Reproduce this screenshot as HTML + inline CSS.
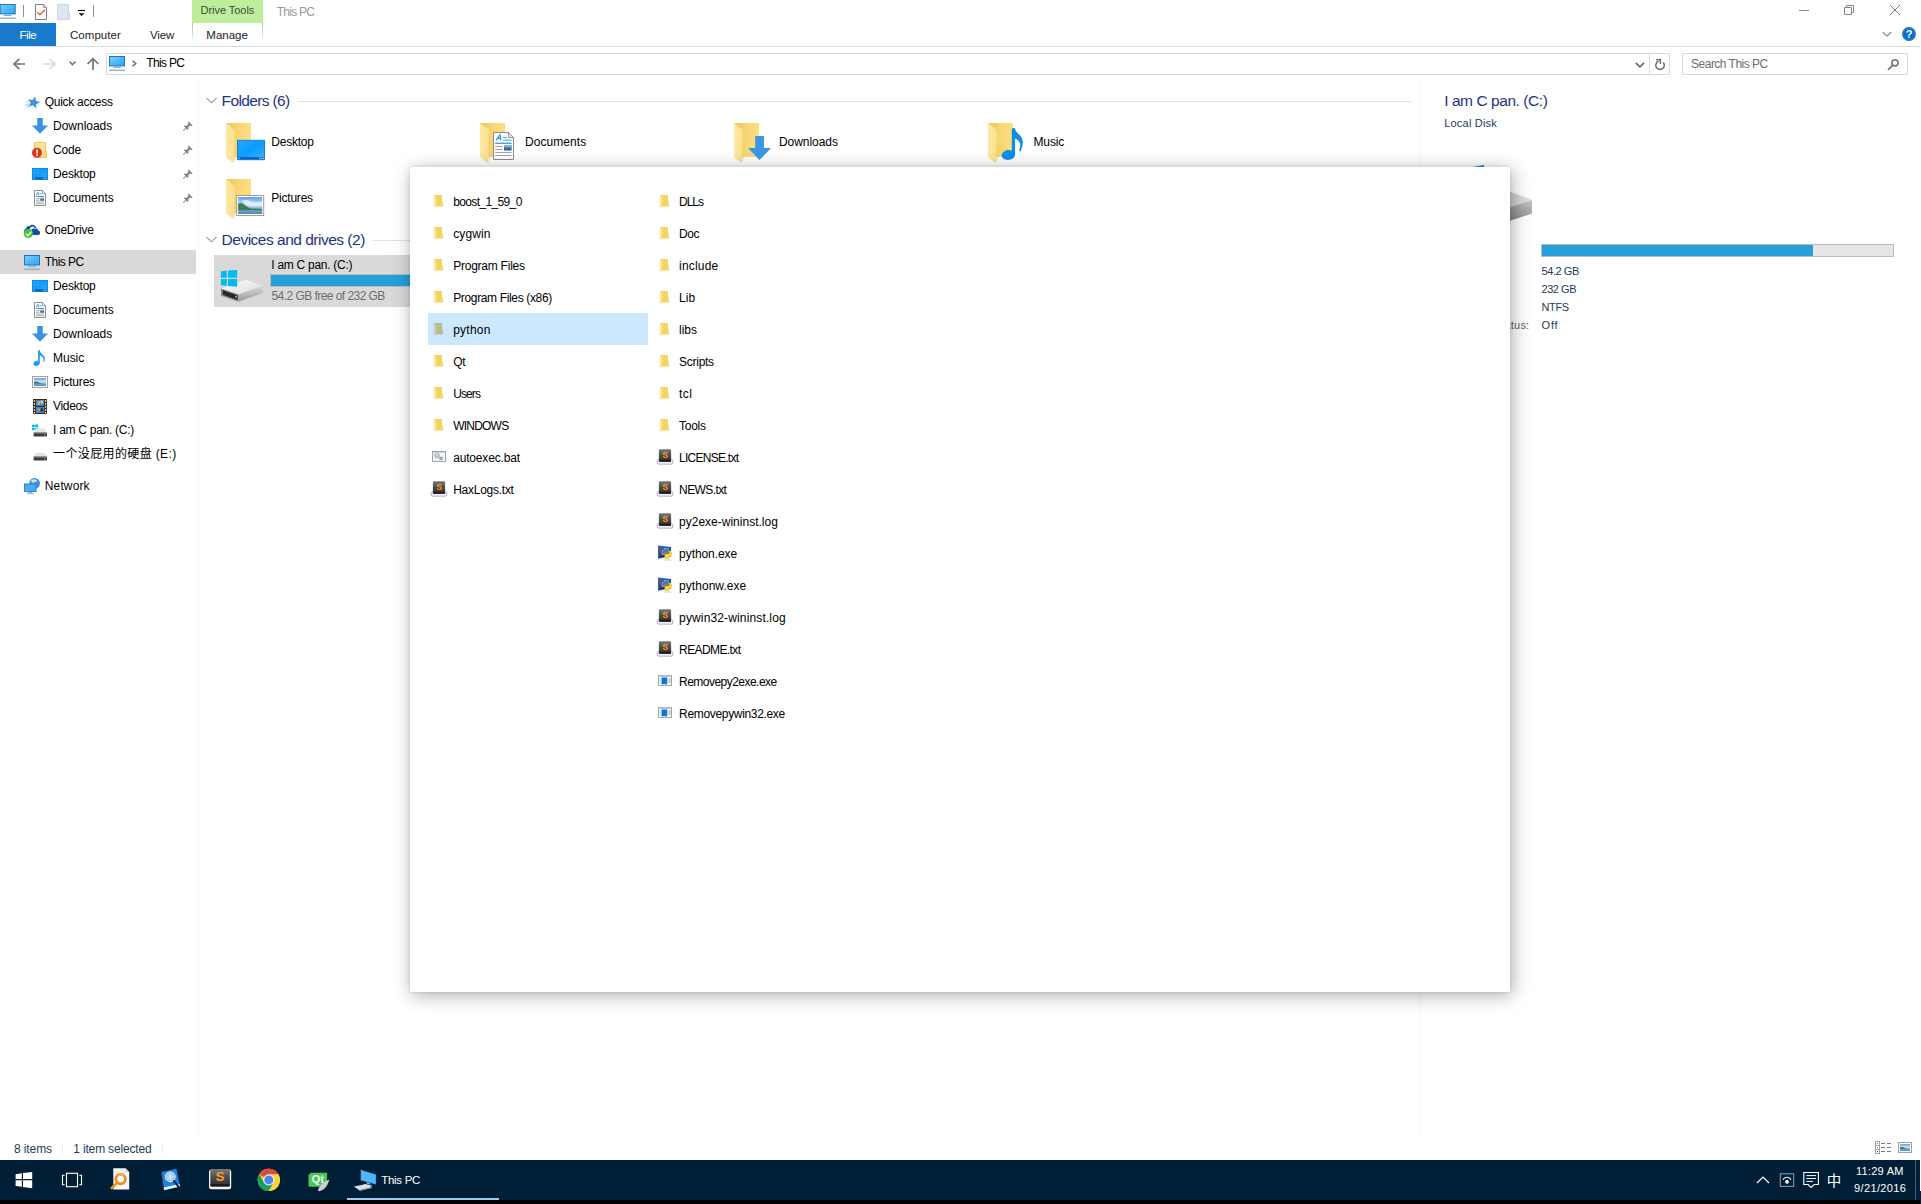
<!DOCTYPE html>
<html lang="en">
<head>
<meta charset="utf-8">
<title>This PC</title>
<style>
html,body{margin:0;padding:0;}
body{width:1921px;height:1204px;position:relative;overflow:hidden;background:#fff;font-family:"Liberation Sans","Noto Sans CJK SC",sans-serif;font-size:12px;color:#000;}
.a{position:absolute;}
.t{position:absolute;white-space:nowrap;line-height:1;font-size:12px;}
.ln{position:absolute;background:#e2e2e2;}
svg{position:absolute;overflow:visible;}
#panel{position:absolute;left:410px;top:167px;width:1100px;height:825px;background:#fff;box-shadow:1.7px 3px 18px rgba(0,0,0,.33),0 0 3.7px rgba(0,0,0,.106);}
#taskbar{position:absolute;left:0;top:1160px;width:1920px;height:40px;background:#001f37;}
#blackstrip{position:absolute;left:0;top:1200px;width:1920px;height:4px;background:#000;}
</style>
</head>
<body>

<svg width="0" height="0" style="position:absolute">
<defs>
<linearGradient id="gmon" x1="0" y1="0" x2="1" y2="1"><stop offset="0" stop-color="#7fd2ff"/><stop offset=".5" stop-color="#4db9fb"/><stop offset="1" stop-color="#2aa6f4"/></linearGradient>
<linearGradient id="gdesk" x1="0" y1="0" x2="1" y2="1"><stop offset="0" stop-color="#27a6ff"/><stop offset=".5" stop-color="#0c9dff"/><stop offset="1" stop-color="#3cb0ff"/></linearGradient>
<linearGradient id="gfold" x1="0" y1="0" x2="1" y2="0"><stop offset="0" stop-color="#eec65c"/><stop offset=".5" stop-color="#f7d673"/><stop offset="1" stop-color="#fcde83"/></linearGradient>
<linearGradient id="gflap" x1="0" y1="0" x2="1" y2="0"><stop offset="0" stop-color="#fde9a6"/><stop offset="1" stop-color="#fbdf8c"/></linearGradient>
<linearGradient id="gsky" x1="0" y1="0" x2="0" y2="1"><stop offset="0" stop-color="#5d9bee"/><stop offset=".45" stop-color="#cfe6fb"/><stop offset=".7" stop-color="#7fb0d0"/><stop offset="1" stop-color="#4d87b8"/></linearGradient>
<linearGradient id="gdrvtop" x1="0" y1="0" x2="1" y2="1"><stop offset="0" stop-color="#fafafa"/><stop offset="1" stop-color="#dcdcdc"/></linearGradient>
<linearGradient id="gdrvside" x1="0" y1="0" x2="0" y2="1"><stop offset="0" stop-color="#d8d8d8"/><stop offset="1" stop-color="#9a9a9a"/></linearGradient>
<linearGradient id="gsub" x1="0" y1="0" x2="0" y2="1"><stop offset="0" stop-color="#7a7a7a"/><stop offset=".5" stop-color="#4a4a4a"/><stop offset="1" stop-color="#2c2c2c"/></linearGradient>
<!-- 16px monitor -->
<symbol id="mon16" viewBox="0 0 16 16" overflow="visible">
<rect x=".5" y=".5" width="15" height="9.4" fill="url(#gmon)" stroke="#2a72ad" stroke-width="1"/>
<rect x="4.2" y="10.8" width="7.6" height="1" fill="#5f9fd0"/>
<rect x="7" y="10" width="2" height="1" fill="#8fbfe4"/>
<rect x="0" y="13.6" width="16" height="1.3" fill="#8fa9c2"/>
</symbol>
<!-- 16px desktop -->
<symbol id="desk16" viewBox="0 0 16 12" overflow="visible">
<rect x=".5" y=".5" width="15" height="11" fill="url(#gdesk)" stroke="#1a86df"/>
<rect x="1" y="9.3" width="14" height="1.9" fill="#0b61b8"/>
<rect x="1.5" y="9.8" width="1" height="1" fill="#fff"/><rect x="11.6" y="9.8" width="1" height="1" fill="#fff"/><rect x="13.4" y="9.8" width="1" height="1" fill="#fff"/>
</symbol>
<!-- 16px downloads arrow -->
<symbol id="dl16" viewBox="0 0 16 16" overflow="visible">
<path d="M5.2 0H10.8V7.4H16L8 15.8L0 7.4H5.2Z" fill="#3b92e2"/>
</symbol>
<!-- 16px document -->
<symbol id="doc16" viewBox="0 0 12 16" overflow="visible">
<path d="M.5 .5H8.3L11.5 3.7V15.5H.5Z" fill="#fff" stroke="#8c8c8c"/>
<path d="M8.3 .5V3.7H11.5" fill="#e8e8e8" stroke="#8c8c8c" stroke-width=".8"/>
<path d="M2.2 5.2L3.9 2.2L4.6 5.2" fill="none" stroke="#2b8be0" stroke-width=".9"/>
<rect x="5.5" y="3.4" width="2.2" height=".8" fill="#3a96e6"/>
<rect x="2" y="6.1" width="8" height=".9" fill="#2b8be0"/>
<rect x="2" y="8" width="3.4" height=".8" fill="#9a9a9a"/><rect x="2" y="9.8" width="3.4" height=".8" fill="#9a9a9a"/>
<rect x="6.2" y="7.8" width="3.8" height="3" fill="#3c6e9e"/><rect x="6.2" y="7.8" width="3.8" height="1.2" fill="#7eb2ea"/>
<rect x="2" y="11.7" width="8" height=".8" fill="#9a9a9a"/><rect x="2" y="13.4" width="8" height=".8" fill="#9a9a9a"/>
</symbol>
<!-- pin -->
<symbol id="pin" viewBox="0 0 10 10" overflow="visible">
<path d="M5.6 .3L9.7 4.4L8.6 5L6.9 4.7L5.3 6.6L5.4 8.6L4.4 9L1 5.6L1.4 4.6L3.4 4.7L5.3 3.1L5 1.4Z" fill="#8a8a8a"/>
<path d="M2.7 7.3L.3 9.7" stroke="#8a8a8a" stroke-width="1.1"/>
</symbol>
<!-- big folder 41x42 -->
<symbol id="bigfold" viewBox="0 0 41 42" overflow="visible">
<rect x="1" y="1" width="25" height="34" fill="url(#gfold)"/>
<path d="M1 1L10 8.2L9 41L1 35.6Z" fill="url(#gflap)"/>
<path d="M9 41L9.3 35L11.5 35Z" fill="#d9d9d9" opacity=".6"/>
</symbol>
<!-- small folder (panel) 12x14 -->
<symbol id="sfold" viewBox="0 0 10 14" overflow="visible">
<path d="M.6 0H8.7V6.4H9.7V11.4H.6Z" fill="#f5d168"/>
<path d="M8.7 6.4V11.4" stroke="#f9dd88" stroke-width=".6"/>
<path d="M.4 .3L3 2.5L2.5 13.2L.4 11.5Z" fill="#fce8a6"/>
</symbol>
<!-- sublime text icon 16x16 -->
<symbol id="sfoldsel" viewBox="0 0 10 14" overflow="visible">
<path d="M.6 0H8.7V6.4H9.7V11.4H.6Z" fill="#b6bd90"/>
<path d="M.4 .3L3 2.5L2.5 13.2L.4 11.5Z" fill="#c9cacb"/>
</symbol>
<symbol id="subl" viewBox="0 0 16 16" overflow="visible">
<rect x=".2" y="10.6" width="15.6" height="4.6" rx="1.3" fill="#f1f1f1" stroke="#8c8c8c" stroke-width=".6"/>
<rect x="1.9" y=".2" width="12.2" height="12.6" rx="1.4" fill="url(#gsub)"/>
<rect x="1.9" y="11.2" width="12.2" height="1.6" rx=".7" fill="#1c1c1c"/>
<text x="8" y="9.1" font-family="Liberation Sans, sans-serif" font-weight="bold" font-size="8.6" fill="#ff9c24" text-anchor="middle">S</text>
</symbol>
</defs>
</svg>
<svg width="0" height="0" style="position:absolute">
<defs>
<linearGradient id="gpywin" x1="0" y1="0" x2="1" y2="1"><stop offset="0" stop-color="#6a6a6a"/><stop offset="1" stop-color="#0c0c0c"/></linearGradient>
<symbol id="bat" viewBox="0 0 14 11" overflow="visible">
<rect x=".5" y=".5" width="13" height="10" fill="#f3f4f5" stroke="#a3a3a3"/>
<rect x="0" y="0" width="14" height="1.3" fill="#9a9a9a"/>
<circle cx="5" cy="4.6" r="2.9" fill="#b4c3d3"/><circle cx="5" cy="4.6" r="1" fill="#d8dfe8"/>
<circle cx="9" cy="7.4" r="1.9" fill="#a9a9a9"/>
</symbol>
<symbol id="inst" viewBox="0 0 14 11" overflow="visible">
<rect x=".5" y=".5" width="13" height="10" fill="#fff" stroke="#a6a6a6"/>
<rect x="0" y="0" width="14" height="1.7" fill="#b2b2b2"/>
<rect x="3.5" y="2.5" width="5.6" height="6.6" rx=".5" fill="#0a78d7"/>
<rect x="3.2" y="2.2" width="6.2" height="7.2" rx=".8" fill="none" stroke="#5fb0f0" stroke-width=".5"/>
<rect x="10.3" y="3.4" width="2.5" height="4.6" fill="#c9c9c9"/>
<rect x="1" y="3" width="1.4" height=".8" fill="#d0d0d0"/><rect x="1" y="5.2" width="1.4" height=".8" fill="#d0d0d0"/><rect x="1" y="7.4" width="1.4" height=".8" fill="#d0d0d0"/>
</symbol>
<symbol id="pyexe" viewBox="0 0 15 16" overflow="visible">
<ellipse cx="9" cy="15" rx="4.5" ry=".9" fill="#e2e2e2"/>
<path d="M0 .6L13 1.9V11.6L0 13.8Z" fill="#1c62d2"/>
<path d="M.9 2.4L12.3 3.3V11L.9 12.7Z" fill="url(#gpywin)"/>
<path d="M6.2 3.6H9.6C10.6 3.6 11.2 4.2 11.2 5.2V7.2H7.6C6.6 7.2 6.2 7.8 6.2 8.8V9.8H5C4.2 9.8 3.8 9.2 3.8 8.2V6.6C3.8 5.6 4.4 5.2 5.2 5.2H6.2Z" fill="#3b76ad" stroke="#dfeaf5" stroke-width=".5"/>
<path d="M11.2 6H12.6C13.6 6 14.2 6.6 14.2 7.6V9.6C14.2 10.6 13.6 11.2 12.6 11.2H11.6V12.4C11.6 13.4 11 14 10 14H8.2C7.2 14 6.6 13.4 6.6 12.4V10C6.6 9 7.2 8.4 8.2 8.4H11.2Z" fill="#ffd23c"/>
</symbol>
</defs>
</svg>

<!-- title bar / ribbon -->
<div class="a" id="drivetools" style="left:192px;top:0;width:71px;height:23px;background:#bdee9b;"></div>
<div class="a" id="filetab" style="left:0;top:23px;width:56px;height:23px;background:#1979ca;"></div>
<div class="a" id="managetabL" style="left:192px;top:23px;width:1px;height:18px;background:linear-gradient(#bcbcbc,#dadada 60%,#fff);"></div>
<div class="a" id="managetabR" style="left:262px;top:23px;width:1px;height:18px;background:linear-gradient(#bcbcbc,#dadada 60%,#fff);"></div>
<div class="ln" id="ribbonline" style="left:0;top:46px;width:1920px;height:1px;background:#dadbdc;"></div>
<!-- address bar -->
<div class="a" id="addrbox" style="left:106px;top:53px;width:1564px;height:22px;border:1px solid #d9d9d9;box-sizing:border-box;"></div>
<div class="a" id="addrsep" style="left:1649px;top:53px;width:1px;height:22px;background:#d9d9d9;"></div>
<div class="a" id="searchbox" style="left:1682px;top:53px;width:226px;height:22px;border:1px solid #d9d9d9;box-sizing:border-box;"></div>
<!-- nav pane -->
<div class="a" id="navsel" style="left:0;top:250px;width:196px;height:24px;background:#d9d9d9;"></div>
<div class="ln" id="navdiv" style="left:198px;top:82px;width:1px;height:1054px;background:#f6f6f6;"></div>
<div class="ln" id="detdiv" style="left:1419px;top:82px;width:1px;height:1054px;background:#f6f6f6;"></div>
<!-- content group lines -->
<div class="ln" style="left:298px;top:101px;width:1113px;height:1px;"></div>
<div class="ln" style="left:373px;top:240px;width:1038px;height:1px;"></div>
<!-- drive tile -->
<div class="a" id="drivesel" style="left:214px;top:255px;width:253px;height:52px;background:#d9d9d9;"></div>
<div class="a" id="drivebar" style="left:270px;top:274px;width:190px;height:13px;background:#e6e6e6;border:1px solid #bcbcbc;box-sizing:border-box;"></div>
<div class="a" id="drivebarfill" style="left:271px;top:275px;width:146px;height:11px;background:#26a0da;"></div>
<!-- details pane bar -->
<div class="a" id="detbar" style="left:1541px;top:244px;width:353px;height:13px;background:#e6e6e6;border:1px solid #bcbcbc;box-sizing:border-box;"></div>
<div class="a" id="detbarfill" style="left:1542px;top:245px;width:271px;height:11px;background:#26a0da;"></div>
<!-- status bar separators -->
<div class="ln" style="left:62px;top:1143px;width:1px;height:11px;background:#ececec;"></div>
<div class="ln" style="left:162px;top:1143px;width:1px;height:11px;background:#ececec;"></div>
<!-- taskbar -->
<div id="taskbar"></div>
<div id="blackstrip"></div>
<div class="a" id="edgecol" style="left:1920px;top:1191px;width:1px;height:13px;background:#001f37;"></div>

<div class="a" id="tbactiveline" style="left:347px;top:1198px;width:152px;height:2px;background:#9bcaf4;"></div>
<div class="a" id="showdesk" style="left:1915px;top:1160px;width:1px;height:40px;background:#4a5a6a;"></div>

<svg id="ic1" class="a" style="left:0;top:0" width="1921" height="1204" viewBox="0 0 1921 1204">
<!-- title bar QAT -->
<use href="#mon16" x="-0.3" y="4" width="16" height="16"/>
<rect x="23" y="5" width="1" height="12" fill="#8f8f8f"/>
<g transform="translate(35,4)">
<path d="M.5 .5H8.6L11.5 3.4V15.5H.5Z" fill="#fbfbfb" stroke="#7c7c7c"/>
<path d="M8.6 .5V3.4H11.5" fill="#e6e6e6" stroke="#7c7c7c" stroke-width=".8"/>
<path d="M2.4 8.2L4.9 10.6L10 5.9" fill="none" stroke="#e8501c" stroke-width="1.3"/>
</g>
<g transform="translate(57,4)">
<path d="M.5 .5H11.5V9H12.5V15.5H.5Z" fill="#dde4f3" stroke="#cbd5ec"/>
<path d="M10.2 9.2V15.4" stroke="#c5d0ea" stroke-width=".8"/>
</g>
<rect x="78" y="10" width="7" height="1" fill="#000"/>
<path d="M78.6 13.2H84.4L81.5 16.1Z" fill="#000"/>
<rect x="93" y="5" width="1" height="12" fill="#8f8f8f"/>
<!-- window controls -->
<rect x="1799" y="10" width="10" height="1" fill="#858585"/>
<path d="M1844.5 7.5H1851.5V14.5H1844.5Z M1846.5 7.3V5.5H1853.5V12.5H1851.7" fill="none" stroke="#858585" stroke-width="1"/>
<path d="M1890 5L1900 15M1900 5L1890 15" stroke="#787878" stroke-width="1" fill="none"/>
<path d="M1882.8 32L1887 36.1L1891.2 32" fill="none" stroke="#8c8c8c" stroke-width="1.3"/>
<circle cx="1909" cy="34" r="6.9" fill="#0f6ecd"/>
<circle cx="1909" cy="34" r="6.1" fill="none" stroke="#2a86e0" stroke-width=".7"/>
<text x="1909" y="38.1" font-family="Liberation Sans, sans-serif" font-size="11" font-weight="bold" fill="#fff" text-anchor="middle">?</text>
<!-- nav arrows -->
<path d="M25 64H14M19.3 58.8L14 64L19.3 69.2" fill="none" stroke="#737373" stroke-width="1.7"/>
<path d="M43 64H54M49.7 58.8L55 64L49.7 69.2" fill="none" stroke="#dadada" stroke-width="1.7"/>
<path d="M69.5 61.6L72.5 64.6L75.5 61.6" fill="none" stroke="#777" stroke-width="1.5"/>
<path d="M93 70V59M87.6 64L93 58.6L98.4 64" fill="none" stroke="#737373" stroke-width="1.7"/>
<use href="#mon16" x="109" y="56" width="16" height="16"/>
<path d="M132.5 60.8L135.7 63.5L132.5 66.2" fill="none" stroke="#6a6a6a" stroke-width="1.5"/>
<path d="M1635.8 62.8L1639.9 66.9L1644 62.8" fill="none" stroke="#6a6a6a" stroke-width="1.7"/>
<!-- refresh -->
<path d="M1663.3 62.4A4.25 4.25 0 1 1 1658.3 61.3" fill="none" stroke="#6c6c6c" stroke-width="1.5"/>
<path d="M1656.2 59.7H1660.4V63.9" fill="none" stroke="#6c6c6c" stroke-width="1.5"/>
<!-- search magnifier -->
<circle cx="1895" cy="62.8" r="3.1" fill="none" stroke="#727472" stroke-width="1.6"/>
<path d="M1892.8 65.1L1888 69.9" stroke="#727472" stroke-width="1.7" fill="none"/>
<!-- nav pane icons -->
<g transform="translate(25.5,96)">
<path d="M8.2 0L10 4.3L14.4 4.6L11 7.5L12.2 11.8L8.2 9.4L4.3 11.8L5.4 7.5L2 4.6L6.5 4.3Z" fill="#3c97e0" transform="rotate(14 8.2 6.2)"/>
<path d="M0 9.5L4 7.7M1 6.2L3.2 5.6M1.2 11.6L4.2 9.6" stroke="#7fbaf0" stroke-width=".9"/>
</g>
<use href="#dl16" x="32" y="118" width="16" height="16"/>
<g transform="translate(32,142)">
<path d="M2.5 .5H13.5V9H14.5V15.5H2.5Z" fill="#fbe29a" stroke="#f0c850"/>
<path d="M12.4 9.2V15.3" stroke="#f0c850" stroke-width=".8"/>
<circle cx="5" cy="10.7" r="5" fill="#d8381c"/>
<rect x="4.3" y="7.5" width="1.5" height="4.2" fill="#fff"/><rect x="4.3" y="12.5" width="1.5" height="1.5" fill="#fff"/>
</g>
<use href="#desk16" x="32" y="168" width="16" height="12"/>
<use href="#doc16" x="34" y="190" width="12" height="16"/>
<use href="#pin" x="183" y="121" width="10" height="10"/>
<use href="#pin" x="183" y="145" width="10" height="10"/>
<use href="#pin" x="183" y="169" width="10" height="10"/>
<use href="#pin" x="183" y="193" width="10" height="10"/>
<!-- onedrive -->
<g transform="translate(24,225)">
<path d="M0 7C0 4.8 1 3.8 2.2 3.6C2.4 1.6 4 .8 5.6 1.2C6.6 -.1 8.2 -.3 9.4 -.1C11.2 .2 12.4 1.6 12.2 3L10.6 3C10.4 2.2 9.6 1.5 8.6 1.5C7.4 1.5 6.4 2.2 6 3.4L6 7Z" fill="#0d4db0"/>
<path d="M7.2 10C6.4 8 6.6 6 7.6 4.6C8.4 3.4 10 3 11 3.8C12.4 3.2 13.8 3.8 14.2 5.4C15.4 5.6 16.1 6.6 16.1 7.8C16.1 9 15.4 10 14.4 10Z" fill="#0f4fae" stroke="#fff" stroke-width="1.2" paint-order="stroke"/>
<circle cx="4.3" cy="8.5" r="4.6" fill="#4bc52c"/>
<path d="M1.9 8.6L3.9 10.7L7.5 6.6" fill="none" stroke="#fff" stroke-width="1.3"/>
</g>
<use href="#mon16" x="24" y="255" width="16" height="16"/>
<use href="#desk16" x="32" y="280" width="16" height="12"/>
<use href="#doc16" x="34" y="302" width="12" height="16"/>
<use href="#dl16" x="32" y="326" width="16" height="16"/>
<!-- music -->
<g transform="translate(33.5,350)">
<path d="M4.6 0.2H6.3C6.6 2.4 8 3.6 9.6 5C11.8 7 12 9.6 10.4 12L9.6 11.6C10.6 9.6 10.2 7.6 8.2 6.2C7.4 5.7 6.8 5.4 6.3 5.2V12.6C6.3 14.6 4.6 16 2.8 16C1 16 0 15 0 13.7C0 12.2 1.6 10.8 3.4 10.8C3.9 10.8 4.3 10.9 4.6 11Z" fill="#1e9bf0"/>
</g>
<!-- pictures -->
<g transform="translate(32,376)">
<rect x=".5" y=".5" width="15" height="11" fill="#fff" stroke="#a0a0a0"/>
<rect x="2" y="2" width="12" height="8" fill="url(#gsky)"/>
<path d="M2 6.2C4 4.8 6 5.6 8 7L11 7.8H2Z" fill="#3f7f5a"/>
</g>
<!-- videos -->
<g transform="translate(33,399)">
<rect x="0" y="0" width="14" height="15" fill="#2b2b2b"/>
<rect x="3" y="1" width="8" height="6" fill="#3b86d8"/><rect x="3" y="8" width="8" height="6" fill="#3b86d8"/>
<rect x="4.5" y="2.2" width="2.5" height="3.5" fill="#e8b03a"/><rect x="7.6" y="1.6" width="2.4" height="3" fill="#f0d060"/>
<rect x="4.5" y="9" width="2.5" height="3.5" fill="#d88a2a"/><rect x="7.6" y="9.4" width="2.4" height="3" fill="#2a2a4a"/>
<g fill="#fff"><rect x=".8" y="1.2" width="1.3" height="1.5"/><rect x=".8" y="4.2" width="1.3" height="1.5"/><rect x=".8" y="7.2" width="1.3" height="1.5"/><rect x=".8" y="10.2" width="1.3" height="1.5"/><rect x=".8" y="13" width="1.3" height="1.3"/>
<rect x="11.9" y="1.2" width="1.3" height="1.5"/><rect x="11.9" y="4.2" width="1.3" height="1.5"/><rect x="11.9" y="7.2" width="1.3" height="1.5"/><rect x="11.9" y="10.2" width="1.3" height="1.5"/><rect x="11.9" y="13" width="1.3" height="1.3"/></g>
</g>
<!-- C drive small -->
<g transform="translate(32,424)">
<g fill="#00b4f0"><rect x="0" y=".8" width="2.6" height="2.4"/><rect x="3.3" y=".5" width="2.8" height="2.7"/><rect x="0" y="3.9" width="2.6" height="2.3"/><rect x="3.3" y="3.9" width="2.8" height="2.6"/></g>
<path d="M1.6 8.4L4 4.6H12.6L15 8.4Z" fill="#e4e4e4"/>
<rect x="1.6" y="8.4" width="13.4" height="4" rx=".6" fill="#3c3c3c"/>
<rect x="1.6" y="8.4" width="13.4" height="1" fill="#9a9a9a"/>
<rect x="11.8" y="10.2" width="1.6" height="1.2" fill="#46d246"/>
</g>
<!-- E drive small -->
<g transform="translate(32,448)">
<path d="M1.6 8.4L4 4.8H12.6L15 8.4Z" fill="#e4e4e4"/>
<rect x="1.6" y="8.4" width="13.4" height="4" rx=".6" fill="#3c3c3c"/>
<rect x="1.6" y="8.4" width="13.4" height="1" fill="#9a9a9a"/>
<rect x="11.8" y="10.2" width="1.6" height="1.2" fill="#46d246"/>
</g>
<!-- network -->
<g transform="translate(24,478)">
<circle cx="10.6" cy="5.4" r="5.4" fill="#4a8fdc"/>
<path d="M7 2.5C9 1 12 1.4 13.4 3C12 4 11 3.4 10 4.4C9 5.4 7.6 4.6 7 2.5Z" fill="#cfe4f8"/>
<rect x=".5" y="6" width="11.5" height="7.6" fill="#4eaaf0" stroke="#2f86d4"/>
<rect x="4.6" y="14" width="3.4" height="1" fill="#7aa6c8"/><rect x="2.6" y="15.2" width="7.4" height="1" fill="#9fb6c8"/>
</g>
<!-- content chevrons -->
<path d="M206.5 98L211.5 103L216.5 98" fill="none" stroke="#6a6a6a" stroke-width="1"/>
<path d="M206.5 237L211.5 242L216.5 237" fill="none" stroke="#6a6a6a" stroke-width="1"/>
<!-- big folders -->
<use href="#bigfold" x="225" y="122" width="41" height="42"/>
<g transform="translate(225,122)">
<rect x="12.5" y="18.3" width="27" height="19.4" fill="url(#gdesk)" stroke="#1684de"/>
<rect x="13" y="35.2" width="26" height="2.2" fill="#0a5fb6"/>
<g fill="#fff"><rect x="13.6" y="35.8" width="1" height="1"/><rect x="34.4" y="35.8" width="1" height="1"/><rect x="36.2" y="35.8" width="1" height="1"/><rect x="37.9" y="35.8" width="1" height="1"/></g>
</g>
<use href="#bigfold" x="479" y="122" width="41" height="42"/>
<g transform="translate(493,132)">
<path d="M.5 .5H15.5L20.5 5.5V27.5H.5Z" fill="#fff" stroke="#8c8c8c"/>
<path d="M15.5 .5V5.5H20.5Z" fill="#e9e9e9" stroke="#8c8c8c" stroke-width=".9"/>
<path d="M3 8.4L7 2.6L8 8.4M4.4 6.4H7.6" fill="none" stroke="#2b8be0" stroke-width="1.1"/>
<rect x="10.2" y="4.9" width="3.6" height="1" fill="#3a96e6"/><rect x="10.2" y="7.6" width="8.3" height="1" fill="#3a96e6"/>
<rect x="2.2" y="10.7" width="16.4" height="1.1" fill="#1e86e0"/>
<rect x="2.2" y="14" width="7.6" height=".9" fill="#9a9a9a"/><rect x="2.2" y="17" width="7.6" height=".9" fill="#9a9a9a"/>
<rect x="11" y="13" width="7.6" height="5.6" fill="#3a6a9a"/><rect x="11" y="13" width="7.6" height="2.4" fill="#7fb2ec"/>
<rect x="2.2" y="20" width="16.4" height=".9" fill="#9a9a9a"/><rect x="2.2" y="23" width="16.4" height=".9" fill="#9a9a9a"/>
</g>
<use href="#bigfold" x="733" y="122" width="41" height="42"/>
<path d="M755.2 136H764V148.1H771.1L759.5 160L748 148.1H755.2Z" fill="#3b97e6"/>
<use href="#bigfold" x="987" y="122" width="41" height="42"/>
<g transform="translate(987,122)">
<path d="M24.8 7.6C24.8 6.2 27 5.6 28 6.6C28.6 9.4 30.4 11 32.6 13C36.4 16.6 37 21.6 33.4 29.6L32 28.8C34 23.8 33.6 20.4 30.6 18C29.6 17.2 28.8 16.8 28 16.6V32.6C28 35.8 24.8 38 20.8 38C17.2 38 14.8 36.2 14.8 33.6C14.8 30.6 18 28 21.6 28C22.8 28 24 28.3 24.8 28.8Z" fill="#0c8fea"/>
</g>
<use href="#bigfold" x="225" y="178" width="41" height="42"/>
<g transform="translate(225,178)">
<rect x="11.7" y="17.5" width="27" height="20" fill="#fff" stroke="#9c9c9c"/>
<rect x="13.2" y="19" width="24" height="17" fill="url(#gsky)"/>
<path d="M13.2 25.6C15 24.6 17 25 19 26.4C21 27.8 23 29.6 26 30.4L37.2 31V32.2H13.2Z" fill="#3d7d58"/>
<path d="M17 23C20 21.4 23 22 26 23.6C29 25 33 24.6 37.2 23.4V27.6C32 28.4 28 28.6 24 27.4C21 26.4 19 24.4 17 23Z" fill="#e8f2fc" opacity=".85"/>
</g>
<!-- drive icon big -->
<g transform="translate(212,252)">

<path d="M9 36.4L34 27.7L50.8 34L26.5 42.4Z" fill="url(#gdrvtop)"/>
<path d="M26.5 42.4L50.8 34V41.2L26.5 49.8Z" fill="url(#gdrvside)"/>
<path d="M9 36.4L26.5 42.4V49.8L9 43.8Z" fill="#8e8e8e"/>
<path d="M10.6 38L25.6 43.2V48L10.6 42.8Z" fill="#262829"/>
<rect x="23.1" y="43.6" width="1.9" height="1.7" fill="#4be04b" transform="skewY(19) translate(0,-8.1)"/>
<g fill="#00baf2">
<path d="M8.9 19.5L14.8 18.6V25.8H8.9Z"/><path d="M16 18.4L25.1 17.9V25.8H16Z"/>
<path d="M8.9 27H14.8V33.9L8.9 33.2Z"/><path d="M16 27H25.1V34.8L16 34.1Z"/>
</g>
</g>
<!-- details pane: visible sliver of large drive icon -->
<linearGradient id="gsl1" x1="0" y1="0" x2="1" y2="0"><stop offset="0" stop-color="#c4c4c4"/><stop offset="1" stop-color="#e2e2e2"/></linearGradient>
<linearGradient id="gsl2" x1="0" y1="0" x2="0" y2="1"><stop offset="0" stop-color="#cdcdcd"/><stop offset=".45" stop-color="#adadad"/><stop offset="1" stop-color="#9c9c9c"/></linearGradient>
<linearGradient id="gsl3" x1="0" y1="0" x2="1" y2="0"><stop offset="0" stop-color="#000" stop-opacity=".22"/><stop offset="1" stop-color="#000" stop-opacity="0"/></linearGradient>
<path d="M1500 188.6L1532 199.4L1500 210.4Z" fill="url(#gsl1)"/>
<path d="M1500 210.3L1532 199.7V213.5L1500 224Z" fill="url(#gsl2)"/>
<path d="M1500 210.3L1532 199.7V213.5L1500 224Z" fill="url(#gsl3)"/>
<path d="M1534 213.4L1540 211.5L1534 214.8Z" fill="#f0f0f0"/>
<path d="M1472.5 167L1484 164.8V167Z" fill="#1e9fe0"/>
<!-- status bar view icons -->
<g transform="translate(1875,1141)">
<rect x=".5" y=".5" width="4" height="12" fill="#fff" stroke="#a2a2a2"/>
<path d="M.5 4.5H4.5M.5 8.5H4.5" stroke="#a2a2a2" stroke-width="1"/>
<rect x="2" y="2" width="1" height="1" fill="#4a7a5c"/><rect x="2" y="6" width="1" height="1" fill="#5a96f0"/><rect x="2" y="10" width="1" height="1" fill="#c8321e"/>
<g fill="#7c7c7c"><rect x="6" y="2" width="4" height="1"/><rect x="12" y="2" width="4" height="1"/><rect x="6" y="6" width="4" height="1"/><rect x="12" y="6" width="4" height="1"/><rect x="6" y="10" width="4" height="1"/><rect x="12" y="10" width="4" height="1"/></g>
</g>
<g transform="translate(1898,1142)">
<rect x=".5" y=".5" width="13" height="10" fill="#fff" stroke="#a2a2a2"/>
<rect x="2" y="2" width="10" height="7" fill="url(#gsky)"/>
<path d="M2 5.4C4 4.4 6 5.2 8 6.6L11 7H2Z" fill="#3f7f5a"/>
</g>
</svg>

<span class="t" style="left:200.6px;top:5px;font-size:11px;color:#414d36;letter-spacing:-0.05px;">Drive Tools</span>
<span class="t" style="left:276.7px;top:6px;color:#999;letter-spacing:-0.73px;">This PC</span>
<span class="t" style="left:19.5px;top:30px;font-size:11.5px;color:#fff;letter-spacing:-0.44px;">File</span>
<span class="t" style="left:70.0px;top:30px;font-size:11.5px;color:#222;letter-spacing:0.04px;">Computer</span>
<span class="t" style="left:150.0px;top:30px;font-size:11.5px;color:#222;letter-spacing:-0.17px;">View</span>
<span class="t" style="left:206.3px;top:30px;font-size:11.5px;color:#222;">Manage</span>
<span class="t" style="left:146.3px;top:57px;letter-spacing:-0.66px;">This PC</span>
<span class="t" style="left:1691.1px;top:58px;color:#6d6d6d;letter-spacing:-0.52px;">Search This PC</span>
<span class="t" style="left:44.8px;top:96px;letter-spacing:-0.29px;">Quick access</span>
<span class="t" style="left:53.1px;top:120px;letter-spacing:-0.03px;">Downloads</span>
<span class="t" style="left:53.1px;top:144px;letter-spacing:-0.23px;">Code</span>
<span class="t" style="left:53.1px;top:168px;letter-spacing:-0.22px;">Desktop</span>
<span class="t" style="left:53.1px;top:192px;">Documents</span>
<span class="t" style="left:44.8px;top:224px;letter-spacing:-0.21px;">OneDrive</span>
<span class="t" style="left:44.8px;top:256px;letter-spacing:-0.55px;">This PC</span>
<span class="t" style="left:53.1px;top:280px;letter-spacing:-0.22px;">Desktop</span>
<span class="t" style="left:53.1px;top:304px;">Documents</span>
<span class="t" style="left:53.1px;top:328px;letter-spacing:-0.03px;">Downloads</span>
<span class="t" style="left:53.1px;top:352px;letter-spacing:-0.06px;">Music</span>
<span class="t" style="left:53.1px;top:376px;letter-spacing:-0.19px;">Pictures</span>
<span class="t" style="left:53.1px;top:400px;letter-spacing:-0.34px;">Videos</span>
<span class="t" style="left:53.1px;top:424px;letter-spacing:-0.28px;">I am C pan. (C:)</span>
<span class="t" style="left:53.1px;top:448px;letter-spacing:0.37px;">一个没屁用的硬盘 (E:)</span>
<span class="t" style="left:44.8px;top:480px;letter-spacing:0.13px;">Network</span>
<span class="t" style="left:221.6px;top:93px;font-size:15.5px;color:#1e3287;letter-spacing:-0.63px;">Folders (6)</span>
<span class="t" style="left:221.6px;top:232px;font-size:15.5px;color:#1e3287;letter-spacing:-0.50px;">Devices and drives (2)</span>
<span class="t" style="left:271.3px;top:136px;letter-spacing:-0.22px;">Desktop</span>
<span class="t" style="left:525.0px;top:136px;letter-spacing:0.06px;">Documents</span>
<span class="t" style="left:779.0px;top:136px;letter-spacing:-0.05px;">Downloads</span>
<span class="t" style="left:1033.4px;top:136px;letter-spacing:-0.09px;">Music</span>
<span class="t" style="left:271.3px;top:192px;letter-spacing:-0.22px;">Pictures</span>
<span class="t" style="left:271.3px;top:259px;letter-spacing:-0.28px;">I am C pan. (C:)</span>
<span class="t" style="left:271.5px;top:290px;color:#6d6d6d;letter-spacing:-0.55px;">54.2 GB free of 232 GB</span>
<span class="t" style="left:1444.2px;top:93px;font-size:15.5px;color:#1e3287;letter-spacing:-0.44px;">I am C pan. (C:)</span>
<span class="t" style="left:1444.2px;top:118px;font-size:11px;color:#1e395b;letter-spacing:0.21px;">Local Disk</span>
<span class="t" style="left:1541.6px;top:266px;font-size:11px;color:#1e395b;letter-spacing:-0.44px;">54.2 GB</span>
<span class="t" style="left:1541.6px;top:284px;font-size:11px;color:#1e395b;letter-spacing:-0.48px;">232 GB</span>
<span class="t" style="left:1541.6px;top:302px;font-size:11px;color:#1e395b;letter-spacing:-0.44px;">NTFS</span>
<span class="t" style="left:1541.6px;top:320px;font-size:11px;color:#1e395b;letter-spacing:0.76px;">Off</span>
<span class="t" style="left:1444.2px;top:266px;font-size:11px;color:#5a6779;letter-spacing:-0.05px;">Space free:</span>
<span class="t" style="left:1444.2px;top:284px;font-size:11px;color:#5a6779;letter-spacing:0.29px;">Total size:</span>
<span class="t" style="left:1444.2px;top:302px;font-size:11px;color:#5a6779;letter-spacing:0.19px;">File system:</span>
<span class="t" style="left:1444.2px;top:320px;font-size:11px;color:#5a6779;letter-spacing:0.23px;">BitLocker status:</span>
<span class="t" style="left:14.0px;top:1143px;color:#1e395b;letter-spacing:-0.11px;">8 items</span>
<span class="t" style="left:73.3px;top:1143px;color:#1e395b;letter-spacing:-0.17px;">1 item selected</span>
<div id="panel"></div>
<div class="a" id="pysel" style="left:428px;top:313px;width:220px;height:32px;background:#cce8ff;"></div>

<svg id="ic2" class="a" style="left:0;top:0" width="1921" height="1204" viewBox="0 0 1921 1204">
<use href="#sfold" x="433.3" y="195" width="10" height="14"/>
<use href="#sfold" x="433.3" y="227" width="10" height="14"/>
<use href="#sfold" x="433.3" y="259" width="10" height="14"/>
<use href="#sfold" x="433.3" y="291" width="10" height="14"/>
<use href="#sfoldsel" x="433.3" y="323" width="10" height="14"/>
<use href="#sfold" x="433.3" y="355" width="10" height="14"/>
<use href="#sfold" x="433.3" y="387" width="10" height="14"/>
<use href="#sfold" x="433.3" y="419" width="10" height="14"/>
<use href="#bat" x="432" y="451" width="14" height="11"/>
<use href="#subl" x="431" y="481" width="16" height="16"/>
<use href="#sfold" x="659.3" y="195" width="10" height="14"/>
<use href="#sfold" x="659.3" y="227" width="10" height="14"/>
<use href="#sfold" x="659.3" y="259" width="10" height="14"/>
<use href="#sfold" x="659.3" y="291" width="10" height="14"/>
<use href="#sfold" x="659.3" y="323" width="10" height="14"/>
<use href="#sfold" x="659.3" y="355" width="10" height="14"/>
<use href="#sfold" x="659.3" y="387" width="10" height="14"/>
<use href="#sfold" x="659.3" y="419" width="10" height="14"/>
<use href="#subl" x="657" y="449" width="16" height="16"/>
<use href="#subl" x="657" y="481" width="16" height="16"/>
<use href="#subl" x="657" y="513" width="16" height="16"/>
<use href="#pyexe" x="658" y="545" width="15" height="16"/>
<use href="#pyexe" x="658" y="577" width="15" height="16"/>
<use href="#subl" x="657" y="609" width="16" height="16"/>
<use href="#subl" x="657" y="641" width="16" height="16"/>
<use href="#inst" x="658" y="675" width="14" height="11"/>
<use href="#inst" x="658" y="707" width="14" height="11"/>
<!-- start -->
<g fill="#fff">
<path d="M15.6 1174.2L21.8 1173.3V1179H15.6Z"/><path d="M23 1173.1L32.2 1171.9V1179H23Z"/>
<path d="M15.6 1180.2H21.8V1186.8L15.6 1186Z"/><path d="M23 1180.2H32.2V1188.3L23 1187Z"/>
</g>
<!-- task view -->
<rect x="66.5" y="1173.3" width="11" height="13.4" fill="none" stroke="#fff" stroke-width="1.1"/>
<path d="M64.7 1175.3H62.5V1184.7H64.7M79.3 1175.3H81.5V1184.7H79.3" fill="none" stroke="#fff" stroke-width="1.1"/>
<!-- search doc -->
<g transform="translate(113,1168)">
<path d="M.3 .2H12.4L16.2 4V21.6H.3Z" fill="#f6f6f6"/>
<path d="M12.4 .2V4H16.2Z" fill="#d2d2d2"/>
<circle cx="7.6" cy="11.1" r="4.8" fill="none" stroke="#e98f28" stroke-width="2.7"/>
<path d="M3.9 14.9L-1.2 20" stroke="#e98f28" stroke-width="2.6" stroke-linecap="round"/>
<path d="M4.6 8A4.8 4.8 0 0 1 11 7.8" fill="none" stroke="#ffd24a" stroke-width=".9"/>
</g>
<!-- blue book -->
<g transform="translate(161,1168)">
<path d="M.4 4L15.4 .8L19 18.4L3 22Z" fill="#1f83de"/>
<path d="M2.6 19.6L18.4 16L19 18.6L3.2 22.2Z" fill="#e8eef6"/>
<path d="M.4 4L3 22L2 19Z" fill="#0e5cb0"/>
<circle cx="9.3" cy="8.8" r="4.9" fill="#8fc4f4" stroke="#e6f0fb" stroke-width="1"/>
<path d="M6 8.8H12.6M9.3 5.4V12.2M6.8 6.6C8.4 7.6 10.2 7.6 11.8 6.6M6.8 11C8.4 10 10.2 10 11.8 11" stroke="#f4f8fd" stroke-width=".7" fill="none"/>
<path d="M13 13L17.4 18.6" stroke="#1a1a1a" stroke-width="2" stroke-linecap="round"/>
</g>
<!-- sublime big -->
<g transform="translate(209,1169)">
<rect x="0" y=".6" width="22.2" height="19.6" rx="2.2" fill="#f4f4f4"/>
<rect x="1.3" y="-.1" width="19.6" height="17.5" rx="1.6" fill="url(#gsub)"/>
<rect x="1.3" y="15" width="19.6" height="2.4" rx="1" fill="#1c1c1c"/>
<text x="11.1" y="12.2" font-family="Liberation Sans, sans-serif" font-weight="bold" font-size="13.5" fill="#ff9c24" text-anchor="middle">S</text>
</g>
<!-- chrome -->
<g transform="translate(268.8,1179.9)">
<circle r="11.1" fill="#fdd23e"/>
<path d="M0 0L-9.61 -5.55A11.1 11.1 0 0 1 9.61 -5.55Z" fill="#de4b3c"/>
<path d="M-9.61 -5.55A11.1 11.1 0 0 1 9.61 -5.55L0 -5.55Z" fill="#de4b3c"/>
<path d="M-9.61 -5.55A11.1 11.1 0 0 0 0 11.1L4.8 2.8L-4.8 2.8Z" fill="#1b9f5c"/>
<path d="M-9.61 -5.55L-4.8 2.8L0 11.1A11.1 11.1 0 0 1 -9.61 -5.55Z" fill="#1b9f5c"/>
<path d="M0 11.1A11.1 11.1 0 0 0 9.61 -5.55L0 -5.55L4.8 2.8Z" fill="#fdd23e"/>
<circle r="5.6" fill="#f4f4f4"/><circle r="4.5" fill="#4688f0"/>
</g>
<!-- Qt -->
<g transform="translate(308.5,1172.8)">
<path d="M2.4 0H18.6V11.6L16.2 14H0V2.4Z" fill="#41cd52"/>
<text x="3" y="10.6" font-family="Liberation Sans, sans-serif" font-weight="bold" font-size="10.5" fill="#fff" textLength="12.5" lengthAdjust="spacingAndGlyphs">Qt</text>
<path d="M9.6 17.8C10 13.6 14 9.4 20.6 7C19.4 12.6 16.4 17.2 11 18.4Z" fill="#c9c9c9"/>
<path d="M9.6 17.8C13.4 14.6 17 11 20.6 7" stroke="#f2f2f2" stroke-width=".6" fill="none"/>
</g>
<!-- this pc (taskbar) -->
<g transform="translate(353,1169)">
<path d="M8.4 1L23 5.4V15.6L8.4 11.6Z" fill="#2f9df0"/>
<path d="M9 1.8L22.4 5.9V14.8L9 11Z" fill="#4db4ff"/>
<path d="M7.8 .8L8.6 1V11.6L7.8 11.4Z" fill="#b8c8d8"/>
<path d="M13.6 13.2L17 14.2V15.6L13.6 14.8Z" fill="#a8b4c0"/>
<path d="M11.6 15L19.4 16.4L17.6 17.8L10.4 16Z" fill="#d4d8dc"/>
<path d="M.8 17.6L12.4 15.2L19 18.2L6.4 21.2Z" fill="#dcdfe2"/>
<path d="M6.4 21.2L19 18.2V18.9L6.4 21.9Z" fill="#a9aeb4"/>
</g>
<!-- tray -->
<path d="M1757 1183L1763 1177L1769 1183" fill="none" stroke="#fff" stroke-width="1.2"/>
<rect x="1780.3" y="1173.8" width="13.4" height="12.6" fill="none" stroke="#8797a6" stroke-width="1.1"/>
<circle cx="1787" cy="1181.8" r="1.9" fill="#fff"/>
<path d="M1783 1179.6A4.6 4.6 0 0 1 1791 1179.6" fill="none" stroke="#fff" stroke-width="1.2"/>
<path d="M1803.8 1172.5H1818.4V1184.5H1814L1811.1 1187.4L1808.2 1184.5H1803.8Z" fill="none" stroke="#fff" stroke-width="1.1"/>
<path d="M1806.4 1175.6H1816M1806.4 1178.5H1816M1806.4 1181.4H1813" stroke="#fff" stroke-width="1" fill="none"/>
</svg>

<span class="t" style="left:453.2px;top:196px;letter-spacing:-0.63px;">boost_1_59_0</span>
<span class="t" style="left:453.2px;top:228px;letter-spacing:0.10px;">cygwin</span>
<span class="t" style="left:453.2px;top:260px;letter-spacing:-0.24px;">Program Files</span>
<span class="t" style="left:453.2px;top:292px;letter-spacing:-0.35px;">Program Files (x86)</span>
<span class="t" style="left:453.2px;top:324px;letter-spacing:0.23px;">python</span>
<span class="t" style="left:453.2px;top:356px;letter-spacing:-0.17px;">Qt</span>
<span class="t" style="left:453.2px;top:388px;letter-spacing:-0.89px;">Users</span>
<span class="t" style="left:453.2px;top:420px;letter-spacing:-0.78px;">WINDOWS</span>
<span class="t" style="left:453.2px;top:452px;letter-spacing:-0.17px;">autoexec.bat</span>
<span class="t" style="left:453.2px;top:484px;letter-spacing:-0.26px;">HaxLogs.txt</span>
<span class="t" style="left:679.1px;top:196px;letter-spacing:-1.07px;">DLLs</span>
<span class="t" style="left:679.1px;top:228px;letter-spacing:-0.42px;">Doc</span>
<span class="t" style="left:679.1px;top:260px;letter-spacing:0.18px;">include</span>
<span class="t" style="left:679.1px;top:292px;letter-spacing:0.04px;">Lib</span>
<span class="t" style="left:679.1px;top:324px;letter-spacing:-0.04px;">libs</span>
<span class="t" style="left:679.1px;top:356px;letter-spacing:-0.28px;">Scripts</span>
<span class="t" style="left:679.1px;top:388px;letter-spacing:0.40px;">tcl</span>
<span class="t" style="left:679.1px;top:420px;letter-spacing:-0.30px;">Tools</span>
<span class="t" style="left:679.1px;top:452px;letter-spacing:-0.74px;">LICENSE.txt</span>
<span class="t" style="left:679.1px;top:484px;letter-spacing:-0.60px;">NEWS.txt</span>
<span class="t" style="left:679.1px;top:516px;">py2exe-wininst.log</span>
<span class="t" style="left:679.1px;top:548px;letter-spacing:-0.07px;">python.exe</span>
<span class="t" style="left:679.1px;top:580px;letter-spacing:0.04px;">pythonw.exe</span>
<span class="t" style="left:679.1px;top:612px;letter-spacing:0.14px;">pywin32-wininst.log</span>
<span class="t" style="left:679.1px;top:644px;letter-spacing:-0.60px;">README.txt</span>
<span class="t" style="left:679.1px;top:676px;letter-spacing:-0.53px;">Removepy2exe.exe</span>
<span class="t" style="left:679.1px;top:708px;letter-spacing:-0.33px;">Removepywin32.exe</span>
<span class="t" style="left:381.3px;top:1175px;font-size:11.5px;color:#fff;letter-spacing:-0.30px;">This PC</span>
<span class="t" style="left:1855.9px;top:1166px;font-size:11px;color:#fff;letter-spacing:0.28px;">11:29 AM</span>
<span class="t" style="left:1854.0px;top:1183px;font-size:11px;color:#fff;letter-spacing:0.38px;">9/21/2016</span>
<span class="t" style="left:1826.8px;top:1174px;font-size:14.5px;color:#fff;letter-spacing:0.70px;">中</span>
</body></html>
